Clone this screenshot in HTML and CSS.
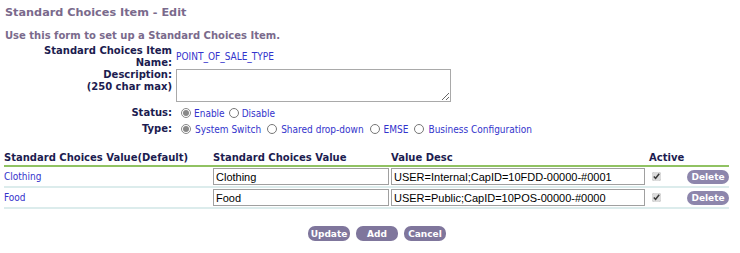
FILE: index.html
```html
<!DOCTYPE html>
<html lang="en">

<head>
    <meta charset="UTF-8" />
    <title>Standard Choices Item - Edit</title>
    <link rel="stylesheet" href="styles.css">
</head>

<body>
    <div class="page-title">Standard Choices Item - Edit</div>
    <div class="intro">Use this form to set up a Standard Choices Item.</div>

    <!-- item details -->
    <table class="item-form">
        <tr class="row-name">
            <td class="lbl">Standard Choices Item<br>Name:</td>
            <td class="val name-val">POINT_OF_SALE_TYPE</td>
        </tr>
        <tr class="row-desc">
            <td class="lbl">Description:<br>(250 char max)</td>
            <td class="val"><textarea class="desc"></textarea></td>
        </tr>
        <tr class="row-opt">
            <td class="lbl">Status:</td>
            <td class="val">
                <div class="opts">
                    <label><input type="radio" name="status" checked>Enable</label>
                    <label><input type="radio" name="status">Disable</label>
                </div>
            </td>
        </tr>
        <tr class="row-opt">
            <td class="lbl">Type:</td>
            <td class="val">
                <div class="opts wide">
                    <label><input type="radio" name="type" checked>System Switch</label>
                    <label><input type="radio" name="type">Shared drop-down</label>
                    <label><input type="radio" name="type">EMSE</label>
                    <label><input type="radio" name="type">Business Configuration</label>
                </div>
            </td>
        </tr>
    </table>

    <!-- values grid -->
    <table class="values">
        <tr class="head">
            <th class="c1">Standard Choices Value(Default)</th>
            <th class="c2">Standard Choices Value</th>
            <th class="c3">Value Desc</th>
            <th class="c4">Active</th>
            <th class="c5"></th>
        </tr>
        <tr>
            <td class="c1"><span class="link">Clothing</span></td>
            <td class="c2"><input type="text" class="txt short" value="Clothing"></td>
            <td class="c3"><input type="text" class="txt long" value="USER=Internal;CapID=10FDD-00000-#0001"></td>
            <td class="c4"><input type="checkbox" class="chk" checked></td>
            <td class="c5"><button class="btn small">Delete</button></td>
        </tr>
        <tr>
            <td class="c1"><span class="link">Food</span></td>
            <td class="c2"><input type="text" class="txt short" value="Food"></td>
            <td class="c3"><input type="text" class="txt long" value="USER=Public;CapID=10POS-00000-#0000"></td>
            <td class="c4"><input type="checkbox" class="chk" checked></td>
            <td class="c5"><button class="btn small">Delete</button></td>
        </tr>
    </table>

    <div class="actions">
        <button class="btn">Update</button>
        <button class="btn">Add</button>
        <button class="btn">Cancel</button>
    </div>
</body>

</html>
```

FILE: styles.css
```css
body {
    margin: 0;
    padding: 0 4px;
    background: #ffffff;
    font-family: 'DejaVu Sans', Verdana, sans-serif;
    font-size: 10px;
    color: #1c1c50;
}

.page-title {
    margin-top: 5px;
    padding-left: 1px;
    font-size: 11.25px;
    line-height: 15px;
    font-weight: bold;
    color: #7a6a8c;
}

.intro {
    margin-top: 9px;
    padding-left: 1px;
    font-size: 10px;
    line-height: 13px;
    font-weight: bold;
    color: #7a6a8c;
}

.item-form {
    border-collapse: collapse;
    margin-top: 3px;
}

.item-form td {
    padding: 0;
    vertical-align: top;
}

.item-form .lbl {
    width: 168px;
    padding-right: 4px;
    text-align: right;
    font-weight: bold;
    font-size: 10px;
    line-height: 12px;
    color: #1c1c50;
}

.item-form .val {
    color: #3333cc;
    font-family: 'DejaVu Sans Condensed', 'DejaVu Sans', sans-serif;
    font-stretch: condensed;
    font-size: 10px;
}

.item-form .name-val {
    vertical-align: middle;
    padding-bottom: 2px;
}

.desc {
    display: block;
    width: 275px;
    height: 33px;
    margin: 0 0 3px;
    box-sizing: border-box;
    border: 1px solid #a9a9a9;
    resize: both;
}

.row-opt .lbl {
    line-height: 16px;
}

.opts {
    display: flex;
    align-items: center;
    height: 16px;
    padding-left: 5px;
    gap: 4px;
    white-space: nowrap;
}

.opts.wide {
    gap: 6px;
}

.opts label {
    display: flex;
    align-items: center;
}

.opts input {
    width: 10px;
    height: 10px;
    margin: 0 3px 0 0;
    accent-color: #888888;
}

.opts.wide input {
    margin-right: 4px;
}

.values {
    width: 725px;
    border-collapse: collapse;
    margin-top: 14px;
}

.values th {
    padding: 0 0 1px;
    text-align: left;
    font-size: 10px;
    line-height: 13px;
    font-weight: bold;
    color: #1c1c50;
    border-bottom: 2px solid #90c262;
}

.values td {
    padding: 1px 0 1px;
    height: 17px;
    border-bottom: 2px solid #dcecec;
}

.c1 {
    width: 209px;
}

.c2 {
    width: 178px;
}

.c3 {
    width: 258px;
}

.c4 {
    width: 34px;
}

.link {
    color: #3333cc;
    font-family: 'DejaVu Sans Condensed', 'DejaVu Sans', sans-serif;
    font-stretch: condensed;
    font-size: 10px;
}

.txt {
    display: block;
    box-sizing: border-box;
    height: 17px;
    padding: 0 2px;
    border: 1px solid #a0a0a0;
    font-family: 'Liberation Sans', Arial, sans-serif;
    font-size: 11px;
    color: #000000;
}

.short {
    width: 176px;
}

.long {
    width: 254px;
}

.chk {
    display: block;
    width: 9px;
    height: 9px;
    margin: 0 0 0 3px;
    accent-color: #dcdcdc;
}

.c5 {
    text-align: right;
}

.btn {
    height: 15px;
    padding: 0;
    border: none;
    border-radius: 7px;
    background-color: #7f769c;
    color: #ffffff;
    font-family: 'DejaVu Sans', Verdana, sans-serif;
    font-weight: bold;
    font-size: 9px;
    cursor: pointer;
}

.btn.small {
    width: 42px;
    height: 14px;
    background-color: #8d86ac;
}

.actions {
    display: flex;
    justify-content: center;
    gap: 6px;
    margin-top: 17px;
    padding-left: 14px;
}

.actions .btn {
    width: 42px;
}
```
